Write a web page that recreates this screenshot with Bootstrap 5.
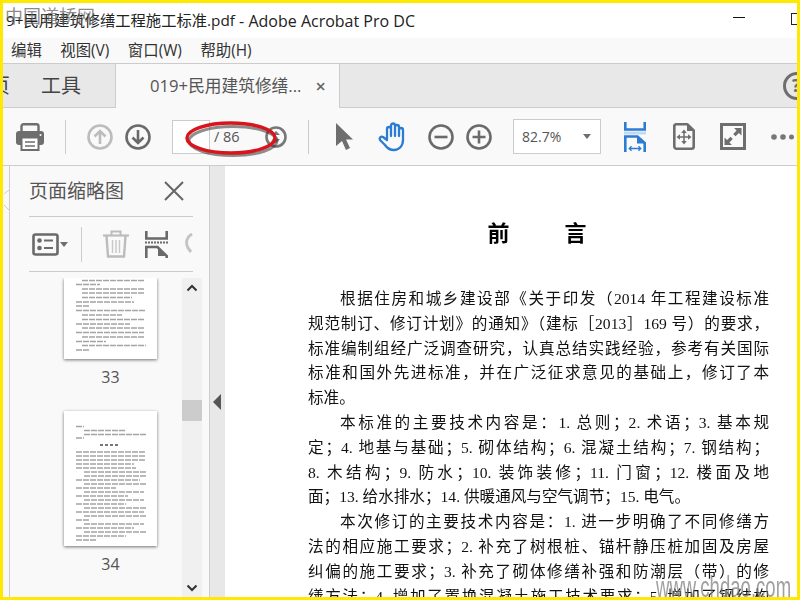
<!DOCTYPE html>
<html lang="zh-CN">
<head>
<meta charset="utf-8">
<title>Acrobat</title>
<link href="https://cdn.jsdelivr.net/npm/bootstrap@5.3.0/dist/css/bootstrap.min.css" rel="stylesheet">
<style>
html,body{margin:0;width:800px;height:600px;overflow:hidden;background:#fff}
body{font-family:"Open Sans","Noto Sans CJK SC",sans-serif;color:#333}
.app-frame{width:800px;height:600px;border:3px solid #ffe900;box-sizing:border-box;position:relative;overflow:hidden;background:#fff}
.title-row{height:35px;background:#fff;padding-left:3px;font-size:15.3px;color:#222;white-space:nowrap}
.title-app{font-size:16px;white-space:pre}
.win-min{width:12px;height:1px;background:#111;margin-left:auto;margin-right:52px;position:relative;top:-3px}
.win-max{position:absolute;left:788px;top:10px;width:9px;height:12px;border:1px solid #222}
.menu-row{height:26px;background:#f9f9f9;border-bottom:1px solid #ccc;padding-left:8px;gap:18.5px;font-size:15.4px;color:#333;line-height:25px}
.tab-row{height:44px;background:#e8e8e8;border-bottom:1px solid #ccc;position:relative}
.tab-cut{width:8px;overflow:hidden;font-size:20px;margin-left:-1px;direction:rtl;color:#444;flex:none}
.tab-tools{margin-left:31px;font-size:20px;color:#444;width:42px;flex:none;line-height:1}
.tab-open{margin-left:32px;width:225px;height:44px;background:#f9f9f9;border-left:1px solid #ccc;border-right:1px solid #ccc;padding-left:34px;font-size:16.7px;color:#555;flex:none;white-space:nowrap;position:relative;top:0}
.tab-x{margin-left:14px;font-size:18px;color:#666;font-weight:600;line-height:1}
.help-ring{position:absolute;left:780px;top:8px;width:28px;height:28px;border:3px solid #6e6e6e;border-radius:50%;font-size:17px;font-weight:700;color:#6e6e6e;padding-left:6px;line-height:21px}
.tool-row{height:58px;background:#f9f9f9;border-bottom:1px solid #ccc;padding-left:13px}
.tool-row>*{flex:none}
.sep-v{width:1px;height:34px;background:#ccc}
.ml-1p{margin-left:1px}.ml-12{margin-left:12px}.ml-13{margin-left:13px}.ml-16{margin-left:16px}.ml-17{margin-left:17px}.ml-20{margin-left:20px}.ml-21{margin-left:21px}.ml-22{margin-left:22px}.ml-23{margin-left:23px}.ml-25{margin-left:25px}.ml-27{margin-left:27px}.ml-28{margin-left:28px}.ml-4{margin-left:4px}
.page-box{width:38px;height:34px;border:1px solid #ccc;background:#fff}
.page-total{width:28px;font-size:14.5px;color:#555;white-space:nowrap}
.zoom-box{width:88px;height:35px;border:1px solid #ccc;background:#fff;font-size:14px;color:#555;padding:0 9px 0 8px}
.caret-down{width:0;height:0;border:4.5px solid transparent;border-top:5px solid #6e6e6e;border-bottom:0}
.work-row{height:431px}
.strip-left{width:7px;border-right:1px solid #ccc;background:#f9f9f9;flex:none;padding-top:20px}
.side-panel{width:200px;background:#f9f9f9;border-right:1px solid #ccc;flex:none}
.panel-head{height:50px;padding:0 25px 0 19px;font-size:19px;color:#555;border:0}
.panel-rule{height:1px;background:#ccc;margin:0 16px 0 19px}
.panel-tools{height:54px;padding-left:22px;overflow:hidden;margin-right:16px}
.panel-tools>*{flex:none}
.sep-panel{width:1px;height:35px;background:#ccc}
.thumb-zone{height:319px;margin-top:6px}
.thumb-col{width:172px;padding-left:54px;flex:none}
.thumb-page{width:93px;background:#fff;box-shadow:0 1px 3px rgba(0,0,0,.55);display:block}
.thumb-ink{filter:blur(.5px)}
.thumb-num{width:93px;text-align:center;font-size:16px;color:#555;line-height:18px;margin:9px 0 25px}
.scroll-col{width:20px;background:#f0f0f0;flex:none}
.scroll-top{margin-top:5px}
.scroll-grip{width:20px;height:21px;background:#ccc;margin-top:107px}
.gutter-col{width:15px;background:#e8e8e8;flex:none;padding-top:222px;padding-left:3px}
.doc-view{background:#fff;padding:0 28px 0 83px;overflow:hidden;height:431px;min-width:0;font-family:"Liberation Serif","Noto Sans CJK SC",serif;color:#111;filter:blur(.3px)}
.doc-head{font-size:22px;font-weight:700;color:#000;text-align:center;padding:52px 0 0 0;height:121px;line-height:32px;white-space:pre;margin-left:-3px}
.doc-line{height:24.8px;line-height:24.8px;font-size:15.6px;text-align:justify;text-align-last:justify;white-space:nowrap;overflow:hidden}
.doc-open{text-align-last:left}
.doc-first{margin-left:32px}
.mark-top{position:absolute;left:2px;top:0;font-family:"Noto Sans CJK SC",sans-serif;font-size:18px;line-height:24px;color:rgba(100,100,100,.75);pointer-events:none;white-space:nowrap}
.mark-bottom{position:absolute;left:653px;top:567px;font-family:"Liberation Sans",sans-serif;font-size:29px;line-height:34px;color:rgba(120,120,120,.7);pointer-events:none;white-space:nowrap;transform:scaleX(.64);transform-origin:left}
.red-ring{position:absolute;left:176px;top:113px;pointer-events:none}
</style>
</head>
<body>
<div class="app-frame d-flex flex-column">
  <div class="title-row d-flex align-items-center flex-none">
    <span>9+民用建筑修缮工程施工标准.pdf</span><span class="title-app"> - Adobe Acrobat Pro DC</span>
    <span class="win-min"></span>
  </div>
  <span class="win-max"></span>
  <div class="menu-row d-flex"><span>编辑</span><span>视图(V)</span><span>窗口(W)</span><span>帮助(H)</span></div>
  <div class="tab-row d-flex align-items-center">
    <div class="tab-cut">页</div>
    <div class="tab-tools">工具</div>
    <div class="tab-open d-flex align-items-center"><span>019+民用建筑修缮...</span><span class="tab-x">×</span></div>
    <span class="help-ring">?</span>
  </div>
  <div class="tool-row d-flex align-items-center">
    <svg width="28" height="28" viewBox="0 0 28 28"><rect x="5.500" y="1.200" width="17" height="10" rx="2" fill="none" stroke="#6e6e6e" stroke-width="2.400"/><rect x="0" y="8" width="28" height="14" rx="3" fill="#6e6e6e"/><rect x="5.500" y="14.500" width="17" height="12.500" fill="#fff" stroke="#6e6e6e" stroke-width="2"/><path d="M9 19h10M9 23h10" stroke="#6e6e6e" stroke-width="1.500"/><circle cx="24.500" cy="12" r="1" fill="#fff"/></svg>
    <span class="sep-v ml-21"></span>
    <svg class="ml-21" width="26" height="26" viewBox="0 0 26 26"><circle cx="13" cy="13" r="11.500" fill="none" stroke="#bcbcbc" stroke-width="2.600"/><path d="M13 20V7M7.500 12.500 13 7l5.500 5.500" fill="none" stroke="#bcbcbc" stroke-width="2.600"/></svg>
    <svg class="ml-12" width="26" height="26" viewBox="0 0 26 26"><circle cx="13" cy="13" r="11.500" fill="none" stroke="#6a6a6a" stroke-width="2.600"/><path d="M13 6v13M7.500 13.500 13 19l5.500-5.500" fill="none" stroke="#6a6a6a" stroke-width="2.600"/></svg>
    <span class="page-box ml-21"></span>
    <span class="page-total ml-4">/ 86</span>
    <svg class="ml-23" width="22" height="22" viewBox="0 0 22 22"><circle cx="11" cy="11" r="9.500" fill="none" stroke="#777" stroke-width="2.600"/><path d="M7 9l4-4 4 4zM7 13h8l-4 4z" fill="#777"/></svg>
    <span class="sep-v ml-21"></span>
    <svg class="ml-27" width="17" height="28" viewBox="0 0 17 28"><path d="M0 0V23L6 18l4 9 4-2-4-8.500h7z" fill="#6e6e6e"/></svg>
    <svg class="ml-25" width="28" height="30" viewBox="0 0 28 30"><path d="M9 17V7a2 2 0 0 1 4 0v7M13 14V3.500a2 2 0 0 1 4 0V14M17 14V5a2 2 0 0 1 4 0v9M21 14V8a2 2 0 0 1 4 0v10c0 6-4 10-9 10s-7-2-9-5L2 18c-1-2 1-4 3-3l4 3" fill="none" stroke="#2b7cd3" stroke-width="2.300" stroke-linecap="round" stroke-linejoin="round"/></svg>
    <svg class="ml-22" width="26" height="26" viewBox="0 0 26 26"><circle cx="13" cy="13" r="11.500" fill="none" stroke="#6a6a6a" stroke-width="2.600"/><path d="M6.500 13h13" stroke="#6a6a6a" stroke-width="2.600"/></svg>
    <svg class="ml-12" width="26" height="26" viewBox="0 0 26 26"><circle cx="13" cy="13" r="11.500" fill="none" stroke="#6a6a6a" stroke-width="2.600"/><path d="M6.500 13h13M13 6.500v13" stroke="#6a6a6a" stroke-width="2.600"/></svg>
    <div class="zoom-box ml-21 d-flex align-items-center justify-content-between"><span>82.7%</span><span class="caret-down"></span></div>
    <svg class="ml-23" width="22" height="30" viewBox="0 0 22 30"><path d="M1.300 0V7.500H20.700V0" fill="none" stroke="#2b7cd3" stroke-width="2.600"/><rect x="0" y="9.500" width="22" height="3" fill="#c4daf0"/><path d="M1.300 30V14.500H13.500L20.700 21V30" fill="none" stroke="#2b7cd3" stroke-width="2.600"/><path d="M13 14.500V21.500H20.700z" fill="#2b7cd3"/><path d="M5.500 26.500H16.500M7.500 24.300 5.300 26.500l2.200 2.200M14.500 24.300l2.200 2.200-2.200 2.200" fill="none" stroke="#2b7cd3" stroke-width="1.400"/></svg>
    <svg class="ml-27" width="22" height="27" viewBox="0 0 22 27"><path d="M2.500 1.300H14.500L20.700 7.500V23.500a2.200 2.200 0 0 1-2.200 2.200H3.500a2.200 2.200 0 0 1-2.200-2.200V2.500z" fill="none" stroke="#6e6e6e" stroke-width="2.600" stroke-linejoin="round"/><path d="M14 1.500V8H20.500z" fill="#6e6e6e"/><path d="M11 8v12M5 14h12" stroke="#6e6e6e" stroke-width="1.500"/><path d="M11 6.500l-2.800 3.500h5.600zM11 21.500l-2.800-3.500h5.600zM3.500 14l3.500-2.800v5.600zM18.500 14l-3.500-2.800v5.600z" fill="#6e6e6e"/></svg>
    <svg class="ml-25" width="26" height="27" viewBox="0 0 26 27"><rect x="1.500" y="1.500" width="23" height="24" fill="none" stroke="#6e6e6e" stroke-width="3"/><path d="M14 5h7.500v7.500l-2.600-2.600-3.400 3.400-2.300-2.300 3.400-3.400zM12 22H4.500v-7.500l2.600 2.600 3.400-3.400 2.300 2.300-3.400 3.400z" fill="#6e6e6e"/></svg>
    <svg class="ml-25" width="23" height="6" viewBox="0 0 23 6"><circle cx="3" cy="3" r="2.800" fill="#777"/><circle cx="12" cy="3" r="2.800" fill="#777"/><circle cx="20.500" cy="3" r="2.500" fill="#777"/></svg>
  </div>
  <div class="work-row d-flex">
    <div class="strip-left"><svg width="6" height="20" viewBox="0 0 6 20"><path d="M6 0 1 4M1 15l5 5" fill="none" stroke="#ccc" stroke-width="1"/></svg></div>
    <div class="side-panel d-flex flex-column">
      <div class="panel-head d-flex align-items-center justify-content-between">
        <span>页面缩略图</span>
        <svg width="20" height="20" viewBox="0 0 20 20"><path d="M1 1 19 19M19 1 1 19" stroke="#666" stroke-width="2"/></svg>
      </div>
      <div class="panel-rule"></div>
      <div class="panel-tools d-flex align-items-center">
        <svg width="27" height="23" viewBox="0 0 27 23"><rect x="1.500" y="1.500" width="24" height="20" rx="2" fill="none" stroke="#6a6a6a" stroke-width="2.600"/><circle cx="7.500" cy="7.500" r="2.300" fill="#6a6a6a"/><circle cx="7.500" cy="15" r="2.300" fill="#6a6a6a"/><path d="M12 7.500h9M12 15h9" stroke="#6a6a6a" stroke-width="2"/></svg>
        <span class="caret-down ml-1p"></span>
        <span class="sep-panel ml-13"></span>
        <svg class="ml-21" width="26" height="28" viewBox="0 0 26 28"><path d="M0 5.500h26" stroke="#bcbcbc" stroke-width="2.200"/><path d="M8.500 5V1.500h9V5" fill="none" stroke="#bcbcbc" stroke-width="2"/><path d="M3.500 6 5 26.500H21L22.500 6" fill="none" stroke="#bcbcbc" stroke-width="2.400"/><path d="M9.500 10V23M13 10V23M16.500 10V23" stroke="#c8c8c8" stroke-width="1.400"/></svg>
        <svg class="ml-16" width="23" height="28" viewBox="0 0 23 28"><path d="M1.300 1V8.500H21.700V1" fill="none" stroke="#6a6a6a" stroke-width="2.600"/><path d="M0 12.500H23" stroke="#6a6a6a" stroke-width="1.800" stroke-dasharray="2 1"/><path d="M1.300 28V17H12.500L21.700 26V28" fill="none" stroke="#6a6a6a" stroke-width="2.600"/><path d="M13 18 21 26H13z" fill="#6a6a6a"/></svg>
        <svg class="ml-17" width="20" height="22" viewBox="0 0 20 22"><path d="M7 1C2 4 0 9 3 15l3 4" fill="none" stroke="#c4c4c4" stroke-width="3"/></svg>
      </div>
      <div class="panel-rule"></div>
      <div class="thumb-zone d-flex overflow-hidden">
        <div class="thumb-col">
          <svg class="thumb-page" width="93" height="81" viewBox="0 0 93 81"><path class="thumb-ink" d="M18 2.500h62M12 6.500h24M18 11h62M18 15h62M18 19.500h50M12 24h58M12 28h14M12 32.500h70M18 37h40M18 41.500h62M12 46h54M18 50h62M12 54.500h68M18 59h62M12 63.500h30M18 67.500h64M12 72h14" fill="none" stroke="#a4a4a4" stroke-width="1.700" stroke-dasharray="6 1"/></svg>
          <div class="thumb-num">33</div>
          <svg class="thumb-page" width="93" height="135" viewBox="0 0 93 135"><path class="thumb-ink" d="M12 15.500h8M20 19.500h42M20 23.500h62M12 27h8M12 41h69M12 45h69M12 49h69M12 53h58M12 57h60M20 61h62M20 65h62M12 69h64M20 73h62M12 77h40M20 81h60M12 85h52M20 89h60M12 93h50M20 97h62M12 101h68M20 105h62M12 109h14M20 113h60M12 117h58M20 121h62M12 125h50M12 129h20" fill="none" stroke="#a4a4a4" stroke-width="1.700" stroke-dasharray="6 1"/><path class="thumb-ink" d="M36 34h20" stroke="#777" stroke-width="2" stroke-dasharray="3 2"/></svg>
          <div class="thumb-num">34</div>
        </div>
        <div class="scroll-col d-flex flex-column align-items-center">
          <svg class="scroll-top" width="10" height="10" viewBox="0 0 10 10"><path d="M.5 7.500 5 3l4.500 4.500" fill="none" stroke="#333" stroke-width="2"/></svg>
          <div class="scroll-grip"></div>
          <svg class="mt-auto mb-1" width="10" height="10" viewBox="0 0 10 10"><path d="M.5 2.500 5 7l4.500-4.500" fill="none" stroke="#333" stroke-width="2"/></svg>
        </div>
      </div>
    </div>
    <div class="gutter-col"><svg width="8" height="16" viewBox="0 0 8 16"><path d="M8 0V16L0 8z" fill="#555"/></svg></div>
    <div class="doc-view flex-grow-1">
      <div class="doc-head">前          言</div>
      <div class="doc-line doc-first">根据住房和城乡建设部《关于印发（2014 年工程建设标准</div>
      <div class="doc-line">规范制订、修订计划》的通知》（建标［2013］169 号）的要求，</div>
      <div class="doc-line">标准编制组经广泛调查研究，认真总结实践经验，参考有关国际</div>
      <div class="doc-line">标准和国外先进标准，并在广泛征求意见的基础上，修订了本</div>
      <div class="doc-line doc-open">标准。</div>
      <div class="doc-line doc-first">本标准的主要技术内容是：1. 总则；2. 术语；3. 基本规</div>
      <div class="doc-line">定；4. 地基与基础；5. 砌体结构；6. 混凝土结构；7. 钢结构；</div>
      <div class="doc-line">8. 木结构；9. 防水；10. 装饰装修；11. 门窗；12. 楼面及地</div>
      <div class="doc-line doc-open">面；13. 给水排水；14. 供暖通风与空气调节；15. 电气。</div>
      <div class="doc-line doc-first">本次修订的主要技术内容是：1. 进一步明确了不同修缮方</div>
      <div class="doc-line">法的相应施工要求；2. 补充了树根桩、锚杆静压桩加固及房屋</div>
      <div class="doc-line">纠偏的施工要求；3. 补充了砌体修缮补强和防潮层（带）的修</div>
      <div class="doc-line">缮方法；4. 增加了置换混凝土施工技术要求；5. 增加了钢结构</div>
    </div>
  </div>
  <svg class="red-ring" width="100" height="42" viewBox="0 0 100 42"><ellipse cx="54" cy="25" rx="44" ry="14.500" fill="none" stroke="#333" stroke-opacity=".55" stroke-width="3"/><ellipse cx="52" cy="22" rx="44" ry="15" fill="none" stroke="#d8141c" stroke-width="3.500"/></svg>
  <div class="mark-top">中国道桥网</div>
  <div class="mark-bottom">www.chdao.com</div>
</div>
</body>
</html>
